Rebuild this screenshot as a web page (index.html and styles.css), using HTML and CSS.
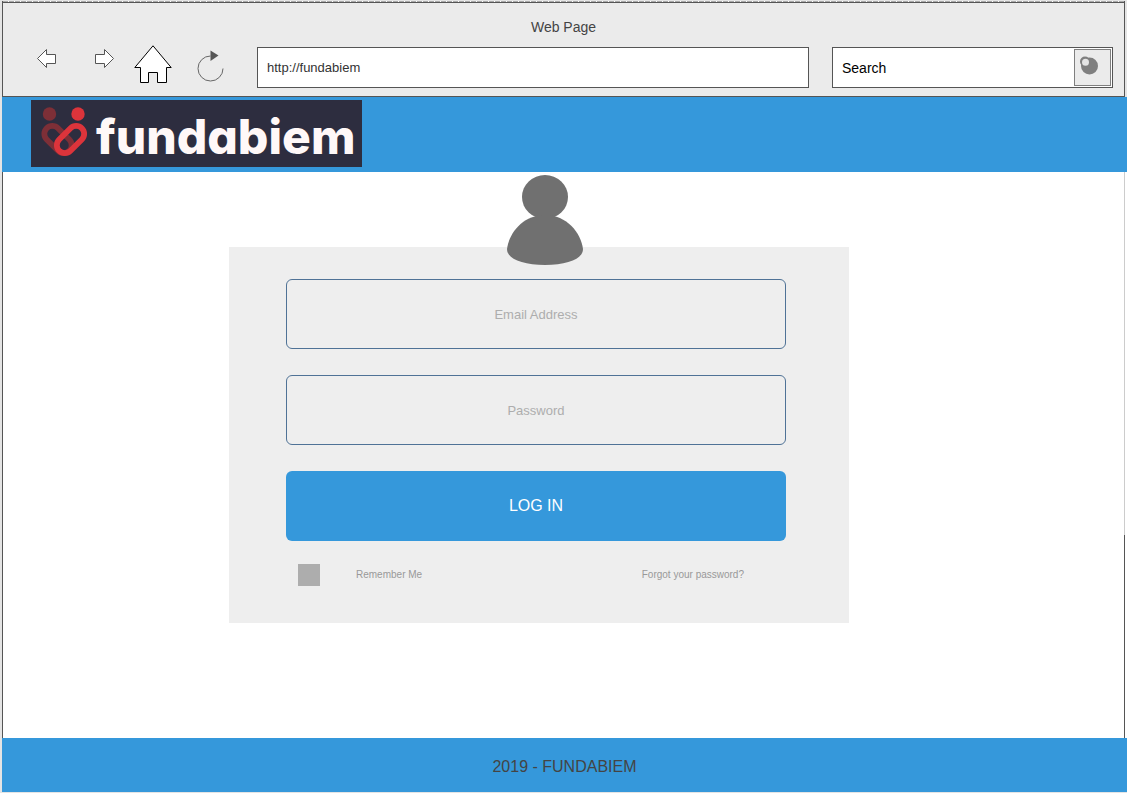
FILE: index.html
```html
<!DOCTYPE html>
<html lang="en">
<head>
<meta charset="utf-8">
<title>Web Page</title>
<link rel="stylesheet" href="styles.css">
</head>
<body>
<div class="window">
  <div class="chrome">
    <div class="window-title">Web Page</div>
    <div class="toolbar">
      <div class="nav-buttons">
        <button class="icon-button back" aria-label="Back">
          <svg width="20" height="20" viewBox="0 0 20 20"><path d="M.5 9.500 9.500.5v5h9v9h-9v4z" fill="#fff" stroke="#555"/></svg>
        </button>
        <button class="icon-button forward" aria-label="Forward">
          <svg width="20" height="20" viewBox="0 0 20 20"><path d="M18.500 9.500 9.500.5v5h-9v9h9v4z" fill="#fff" stroke="#555"/></svg>
        </button>
        <button class="icon-button home" aria-label="Home">
          <svg width="38" height="40" viewBox="0 0 38 40"><path d="M19 .8.8 22.500h5.700v15h8v-10h9v10h9v-15h4.700z" fill="#fff" stroke="#000"/></svg>
        </button>
        <button class="icon-button reload" aria-label="Reload">
          <svg width="28" height="33" viewBox="0 0 28 33"><path d="M13.500 6A12.500 12.500 0 1 0 26 18.500" fill="none" stroke="#666"/><path d="M13.500.5 21.500 5.500 13.500 11z" fill="#555"/></svg>
        </button>
      </div>
      <input class="address" type="text" aria-label="Address" value="http://fundabiem">
      <form class="search">
        <input class="search-input" type="text" aria-label="Search" value="Search">
        <button class="search-button" type="button" aria-label="Go">
          <svg width="20" height="20" viewBox="0 0 20 20"><circle cx="10.500" cy="10" r="8.500" fill="#7f7f7f"/><circle cx="6" cy="5.500" r="5" fill="#7f7f7f"/><circle cx="6.500" cy="6.300" r="3.500" fill="#e4e4e4"/></svg>
        </button>
      </form>
    </div>
  </div>

  <header class="banner">
    <a class="logo" href="#">
      <svg class="logo-mark" width="48" height="52" viewBox="0 0 48 52" aria-hidden="true">
        <g fill="none" stroke-width="5.800">
          <rect x="9" y="17.500" width="16" height="32" rx="8" transform="rotate(-45 17 33.500)" stroke="#7d2f37"/>
          <rect x="21.500" y="17.500" width="16" height="32" rx="8" transform="rotate(45 29.500 33.500)" stroke="#dc343b"/>
        </g>
        <circle cx="8.500" cy="8" r="6.700" fill="#7d2f37"/>
        <circle cx="37" cy="8" r="6.700" fill="#dc343b"/>
      </svg>
      <span class="logo-name">fundabiem</span>
    </a>
  </header>

  <div class="content">
    <main class="page">
      <form class="login">
        <svg class="avatar" width="76" height="90" viewBox="0 0 76 90" aria-hidden="true"><ellipse cx="38" cy="22" rx="23" ry="22" fill="#707070"/><path d="M0 74C2 58 16 40 38 40S74 58 76 74C76 84 60 90 38 90S0 84 0 74z" fill="#707070"/></svg>
        <input class="field" type="email" aria-label="Email Address" placeholder="Email Address">
        <input class="field" type="password" aria-label="Password" placeholder="Password">
        <button class="submit" type="button">LOG IN</button>
        <div class="options">
          <input class="check" type="checkbox" id="remember">
          <label for="remember">Remember Me</label>
          <a class="forgot" href="#">Forgot your password?</a>
        </div>
      </form>
    </main>
    <div class="edge"></div>
  </div>

  <footer class="footer">2019 - FUNDABIEM</footer>
</div>
</body>
</html>
```

FILE: styles.css
```css
* {
  box-sizing: border-box;
}

body {
  margin: 0;
  background: #fff;
  color: #444;
  font: 14px/20px "Liberation Sans", Arial, sans-serif;
}

input,
button {
  margin: 0;
  font: inherit;
}

.window {
  display: flex;
  flex-direction: column;
  min-height: 100vh;
  padding: 1px 0 1px 2px;
  background: #e4e4e4;
}

.chrome {
  margin-right: 2px;
  border: 1px solid #555;
  border-top: 0;
  background: #ebebeb;
}

.chrome::before {
  content: "";
  display: block;
  height: 1px;
  border-bottom: 1px solid #555;
  background: repeating-linear-gradient(90deg, #aaa 0 5px, #fff 5px 6px);
}

.window-title {
  padding-top: 14px;
  text-align: center;
}

.toolbar {
  display: flex;
  align-items: center;
  gap: 23px;
  padding: 10px 11px 8px 34px;
}

.nav-buttons {
  display: flex;
  flex: none;
  align-items: center;
  height: 41px;
  width: 197px;
}

.icon-button {
  display: block;
  padding: 0;
  border: 0;
  background: none;
}

.icon-button svg,
.search-button svg {
  display: block;
}

.back,
.forward {
  padding-bottom: 18px;
}

.forward {
  margin-left: 38px;
}

.home {
  margin: 0 25px 6px 19px;
}

.reload {
  padding-bottom: 2px;
}

.address,
.search {
  height: 41px;
  min-width: 0;
  border: 1px solid #555;
  background: #fff;
}

.address {
  flex: 552 1 552px;
  padding: 0 9px;
  color: #333;
  font-size: 13px;
}

.search {
  display: flex;
  flex: 281 1 281px;
  padding: 1px;
}

.search-input {
  flex: 1;
  min-width: 0;
  padding: 0 8px;
  border: 0;
  background: none;
  color: #000;
}

.search-button {
  width: 37px;
  padding: 0 0 4px 4px;
  border: 1px solid #7f7f7f;
  background: #ebebeb;
}

.banner {
  padding: 3px 29px 5px;
  background: #3598db;
}

.logo {
  display: flex;
  align-items: center;
  width: 331px;
  height: 67px;
  padding-left: 10px;
  background: #2d2d3f;
  color: #fff8f8;
  text-decoration: none;
}

.logo-mark {
  flex: none;
  margin-bottom: 3px;
}

.logo-name {
  padding: 6px 0 0 7px;
  font: 800 48px/60px Inter, sans-serif;
  font-feature-settings: "cv11";
}

.content {
  display: flex;
  flex: 1;
  background: #fff;
}

.page {
  display: grid;
  grid-template-columns: 226fr 620fr 275fr;
  align-items: start;
  flex: 1;
  padding: 75px 0 24px;
  border-left: 1px solid #555;
}

.login {
  position: relative;
  display: flex;
  flex-direction: column;
  grid-column: 2;
  gap: 26px;
  padding: 32px 63px 37px 57px;
  background: #eee;
}

.avatar {
  position: absolute;
  top: -72px;
  left: 51%;
  transform: translateX(-50%);
}

.field,
.submit {
  width: 100%;
  height: 70px;
  border-radius: 6px;
  text-align: center;
}

.field {
  border: 1px solid #4f7296;
  background: #eee;
  color: #444;
  font-size: 13px;
}

.field::placeholder {
  color: #adadad;
  opacity: 1;
}

.submit {
  border: 0;
  background: #3598db;
  color: #fff;
  font-size: 16px;
}

.options {
  display: flex;
  align-items: center;
  margin-top: -3px;
  padding: 0 42px 0 12px;
  color: #999;
  font-size: 10px;
}

.check {
  appearance: none;
  width: 22px;
  height: 22px;
  margin-right: 36px;
  background: #adadad;
}

.check:checked {
  background: #3598db;
}

.forgot {
  margin-left: auto;
  color: #999;
  text-decoration: none;
}

.edge {
  width: 3px;
  border-left: 1px solid #555;
  border-image: linear-gradient(#ccc 0 64%, #555 64%) 1;
}

.footer {
  padding: 19px 0 15px;
  background: #3598db;
  font-size: 16px;
  text-align: center;
}
```
